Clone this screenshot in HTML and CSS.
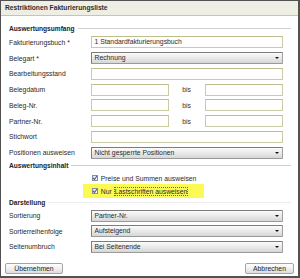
FILE: index.html
```html
<!DOCTYPE html>
<html lang="de">
<head>
  <meta charset="UTF-8">
  <title>Restriktionen Fakturierungsliste</title>
  <link rel="stylesheet" href="styles.css">
</head>
<body>
  <div class="dialog">
    <div class="titlebar">Restriktionen Fakturierungsliste</div>

    <div class="content">
      <div class="section-head"><span>Auswertungsumfang</span></div>
      <div class="form">
        <label>Fakturierungsbuch *</label>
        <div class="input">1 Standardfakturierungsbuch</div>

        <label>Belegart *</label>
        <div class="select">Rechnung<span class="arrow"></span></div>

        <label>Bearbeitungsstand</label>
        <div class="input"></div>

        <label>Belegdatum</label>
        <div class="range"><div class="input"></div><span class="bis">bis</span><div class="input"></div></div>

        <label>Beleg-Nr.</label>
        <div class="range"><div class="input"></div><span class="bis">bis</span><div class="input"></div></div>

        <label>Partner-Nr.</label>
        <div class="range"><div class="input"></div><span class="bis">bis</span><div class="input"></div></div>

        <label>Stichwort</label>
        <div class="input"></div>

        <label>Positionen ausweisen</label>
        <div class="select">Nicht gesperrte Positionen<span class="arrow"></span></div>
      </div>

      <div class="section-head second"><span>Auswertungsinhalt</span></div>
      <div class="checks">
        <div class="check">
          <span class="box"><svg width="6" height="6" viewBox="0 0 6 6"><path d="M1 3 L2.5 4.5 L5 1" fill="none" stroke="#4a5a8a" stroke-width="1.1"/></svg></span>
          Preise und Summen ausweisen
        </div>
        <div class="check highlight">
          <span class="box"><svg width="6" height="6" viewBox="0 0 6 6"><path d="M1 3 L2.5 4.5 L5 1" fill="none" stroke="#4a5a8a" stroke-width="1.1"/></svg></span>
          <span>Nur</span><span class="focus">Lastschriften ausweisen</span>
        </div>
      </div>

      <div class="section-head third"><span>Darstellung</span></div>
      <div class="form compact">
        <label>Sortierung</label>
        <div class="select">Partner-Nr.<span class="arrow"></span></div>

        <label>Sortierreihenfolge</label>
        <div class="select">Aufsteigend<span class="arrow"></span></div>

        <label>Seitenumbruch</label>
        <div class="select">Bei Seitenende<span class="arrow"></span></div>
      </div>
    </div>

    <div class="buttons">
      <button class="btn ok">Übernehmen</button>
      <button class="btn cancel">Abbrechen</button>
    </div>
  </div>
</body>
</html>
```

FILE: styles.css
```css
* {
  margin: 0;
  padding: 0;
  box-sizing: border-box;
}

body {
  font-family: 'Liberation Sans', Arial, sans-serif;
  font-size: 6.8px;
  color: #2a2a2a;
  background: #fff;
}

.dialog {
  width: 300px;
  height: 278px;
  border: 1px solid #525252;
  border-right-width: 2px;
  border-bottom-width: 2px;
  background: #fff;
}

.titlebar {
  height: 15px;
  line-height: 14px;
  padding-left: 4px;
  background: #eeeee5;
  border-bottom: 1px solid #c4c4bc;
  font-weight: bold;
  font-size: 6.7px;
  color: #2e2e2e;
}

.content {
  padding: 7.5px 15.5px 0 8px;
}

.section-head {
  display: flex;
  align-items: center;
  height: 10px;
  margin-right: -8.5px;
  font-weight: bold;
  font-size: 6.6px;
  color: #222;
}

.section-head::after {
  content: "";
  flex: 1;
  height: 1px;
  margin-left: 3px;
  background: #cfcfcf;
}

.section-head.second {
  margin-top: 2px;
}

.section-head.third {
  height: 8px;
  margin-top: 0;
}

.section-head.third::after {
  background: #ececec;
}

.form {
  display: grid;
  grid-template-columns: 82px 1fr;
  grid-auto-rows: 12px;
  row-gap: 3.75px;
  align-items: center;
  margin-top: 2.8px;
}

.form.compact {
  margin-top: 3.5px;
  row-gap: 3.5px;
}

.input {
  height: 12px;
  line-height: 10px;
  padding-left: 2.5px;
  border: 1px solid #cbcba3;
  border-top-color: #bdbd8e;
  background: #fff;
  white-space: nowrap;
  overflow: hidden;
}

.select {
  position: relative;
  height: 12px;
  line-height: 10px;
  padding-left: 2.5px;
  border: 1px solid #7c7c7c;
  border-right-color: #a0a0a0;
  border-bottom-color: #9a9a9a;
  border-radius: 1px;
  background: linear-gradient(#fbfbfb, #e6e6e6 60%, #d6d6d6);
  white-space: nowrap;
}

.select .arrow {
  position: absolute;
  right: 3px;
  top: 4px;
  width: 0;
  height: 0;
  border-left: 2px solid transparent;
  border-right: 2px solid transparent;
  border-top: 2.5px solid #111;
}

.range {
  display: grid;
  grid-template-columns: 77.5px 1fr 78px;
  align-items: center;
  height: 12px;
}

.bis {
  text-align: center;
  color: #333;
}

.checks {
  margin-top: 2.5px;
  padding-left: 82.5px;
}

.check {
  display: flex;
  align-items: center;
  height: 10px;
  white-space: nowrap;
}

.check .box {
  display: inline-flex;
  align-items: center;
  justify-content: center;
  width: 6px;
  height: 6px;
  margin-right: 3.3px;
  border: 1px solid #8290a8;
  background: linear-gradient(135deg, #e4e4dc, #fbfbf8);
}

.check .box svg {
  margin: -1px;
}

.check.highlight {
  width: 121px;
  height: 14px;
  margin-top: 1.3px;
  margin-left: -9px;
  padding-left: 9px;
  background: #fafa52;
}

.focus {
  margin-left: 3px;
  outline: 1px dotted #666;
  outline-offset: 0;
}

.buttons {
  display: flex;
  justify-content: space-between;
  margin-top: 10px;
  padding: 0 4px;
}

.btn {
  height: 11px;
  font-family: 'Liberation Sans', Arial, sans-serif;
  font-size: 6.8px;
  color: #222;
  border: 1px solid #a4a4a4;
  border-radius: 2px;
  background: linear-gradient(#ffffff, #ececec 60%, #dcdcdc);
  cursor: pointer;
}

.btn.ok {
  width: 58px;
}

.btn.cancel {
  width: 49px;
}
```
